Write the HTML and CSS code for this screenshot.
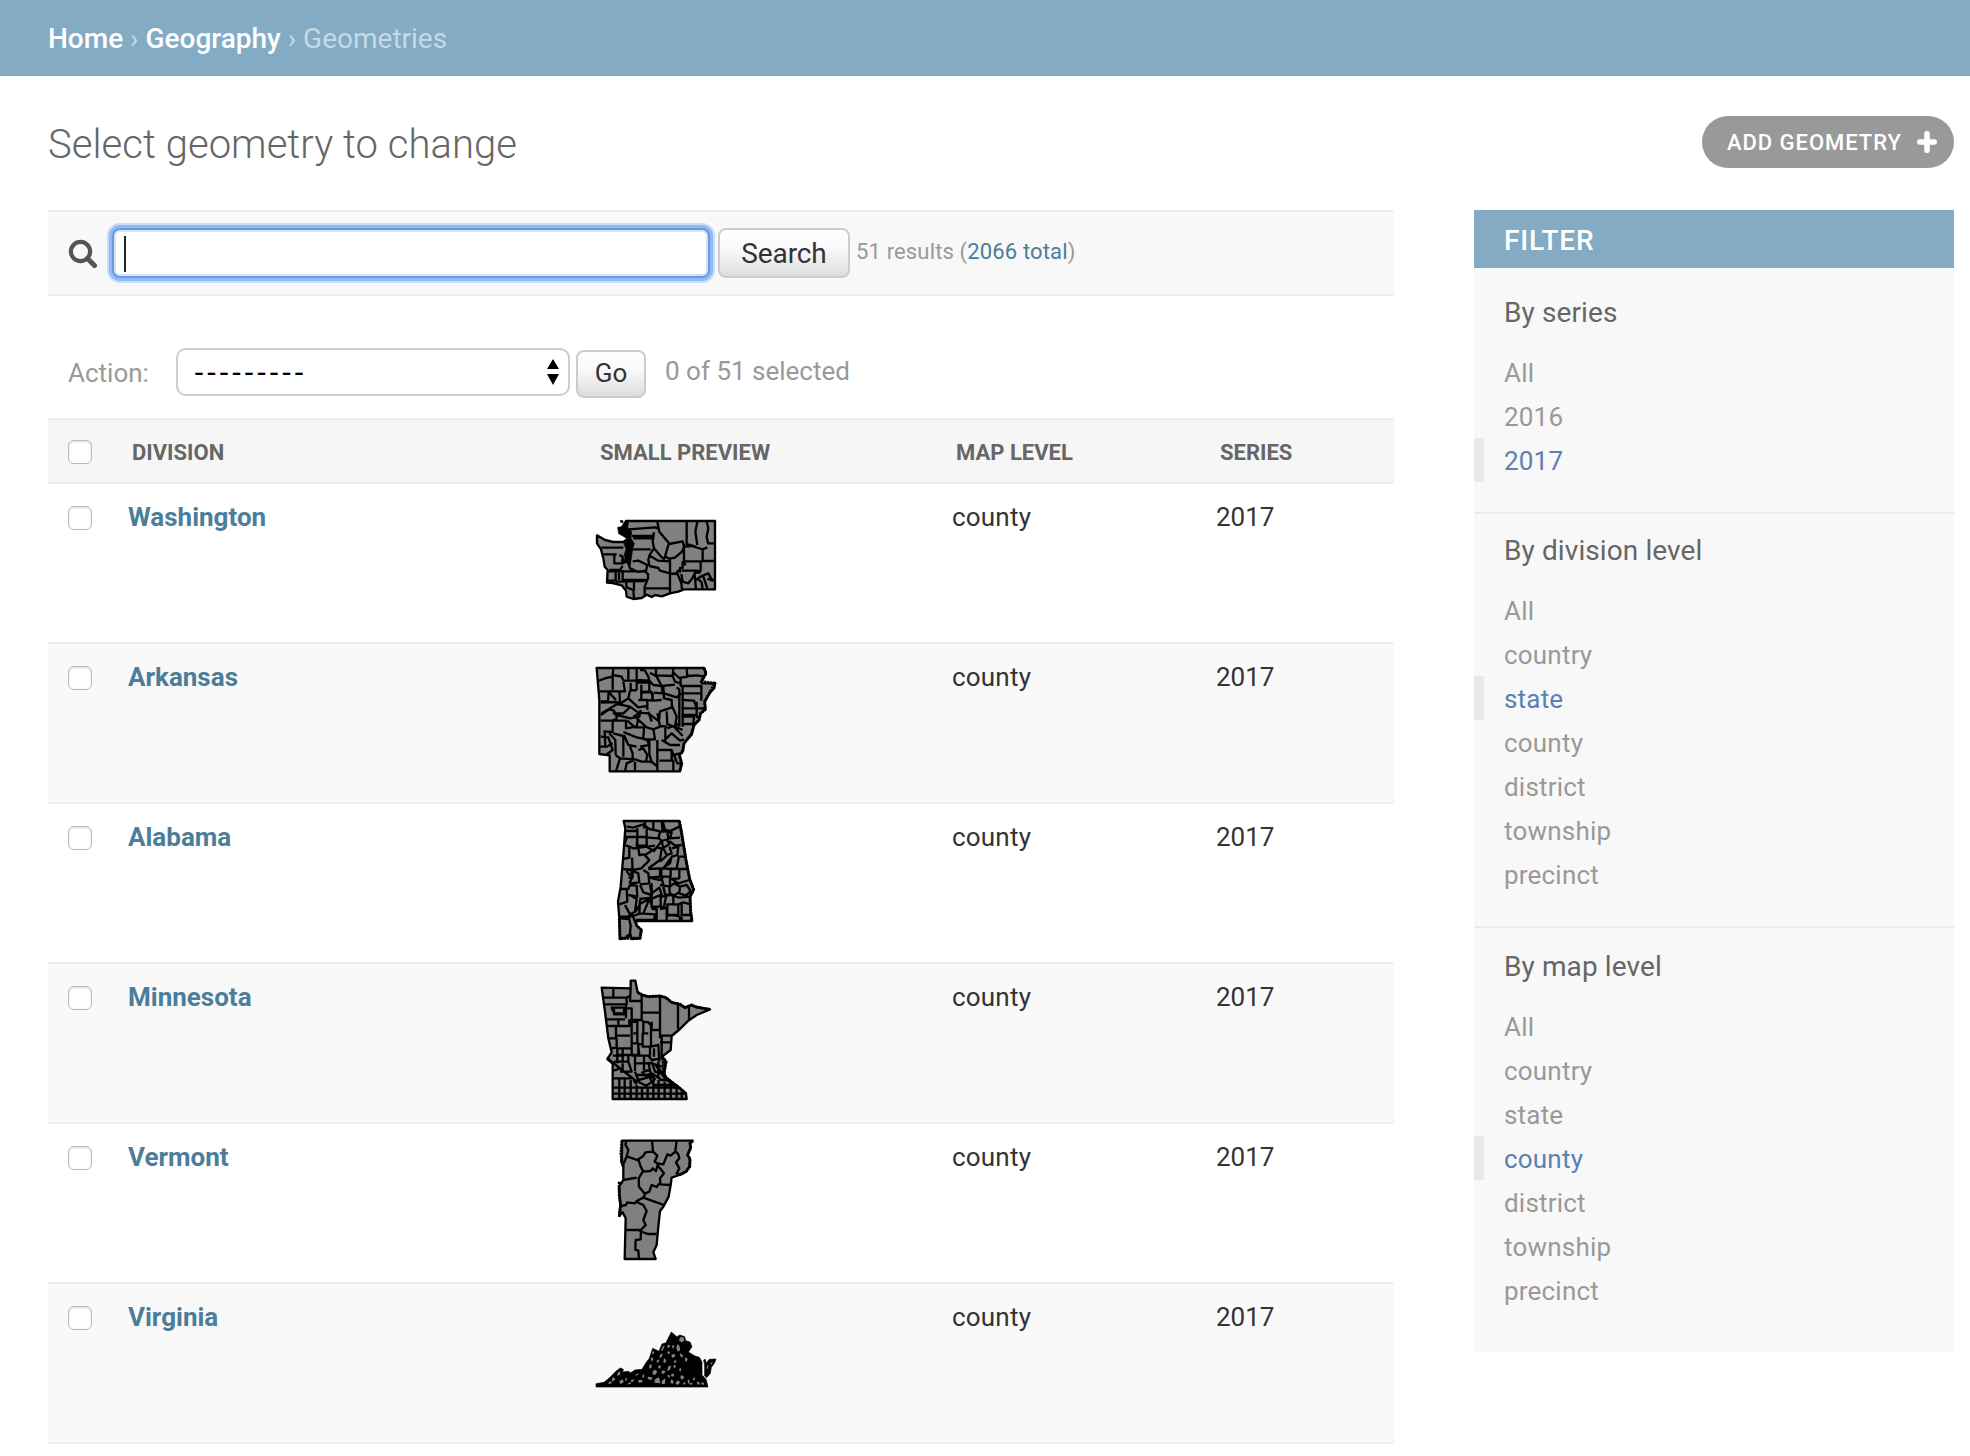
FILE: index.html
```html
<!DOCTYPE html>
<html lang="en">
<head>
<meta charset="utf-8">
<title>Select geometry to change</title>
<link rel="stylesheet" href="styles.css">
</head>
<body>
<nav class="breadcrumbs"><a>Home</a> › <a>Geography</a> › <span>Geometries</span></nav>
<main class="content">
  <header class="page-head">
    <h1><span>Select geometry to change</span></h1>
    <a class="add-button"><span>Add geometry</span>
      <svg width="20" height="22" viewBox="0 0 20 22"><path d="M10 2.8v16.400M2.800 11h14.400" stroke="#fff" stroke-width="5.600" stroke-linecap="round"/></svg>
    </a>
  </header>
  <div class="columns">
    <section class="changelist">
      <form class="toolbar">
        <svg class="search-icon" width="30" height="30" viewBox="0 0 30 30" fill="none" stroke="#555"><circle cx="12.5" cy="12.5" r="9.6" stroke-width="4.2"/><path d="M19.5 19.5L26.500 26.500" stroke-width="5" stroke-linecap="round"/></svg>
        <div class="search-input"><i class="caret"></i></div>
        <button class="btn search-btn" type="button"><span>Search</span></button>
        <span class="results">51 results (<a>2066 total</a>)</span>
      </form>
      <div class="actions">
        <label>Action:</label>
        <div class="select"><span>---------</span><svg width="12" height="26" viewBox="0 0 12 26"><path d="M6 0L12 10H0ZM0 15H12L6 26Z"/></svg></div>
        <button class="btn go-btn" type="button"><span>Go</span></button>
        <span class="counter">0 of 51 selected</span>
      </div>
      <table>
        <colgroup><col class="c1"><col class="c2"><col class="c3"><col class="c4"><col class="c5"></colgroup>
        <thead><tr><th class="check"><i class="box"></i></th><th>Division</th><th>Small preview</th><th>Map level</th><th>Series</th></tr></thead>
        <tbody>
          <tr><td class="check"><i class="box"></i></td><td><a>Washington</a></td><td>
            <svg class="map" viewBox="48 0 360 360">
              <path class="land" d="M138 63H405V268H312L295 275 270 280 245 289 225 285 215 291 200 284 185 294 160 297 140 290 138 272 125 256 98 249 81 248 83 210 74 200 70 175 63 148 51 130 51 106 75 120 100 126 130 126 142 118 150 100 140 88Z"/>
              <path d="M145 88L225 82 236 86M156 108H220M160 115L218 114 222 97M232 65L238 95 267 130 262 145M320 65V132L348 140M352 65L346 95 352 135M380 65L385 85 380 110 384 130H405M222 97L218 125 222 145 212 160 205 178 208 198M157 148H212M222 145L245 172 255 178M267 132L308 124 312 140 306 155 285 173 268 176 255 170 262 145M312 132V190L318 195M314 140L335 138 368 148 382 142M368 145V183H405M312 184H362V212L348 218M306 212H355M270 176V280M300 218V204H308V184M304 212H294L288 222 270 220 240 212 235 204 208 198M205 165L235 182 268 184M64 143H130M70 163H110M103 160V190H128V170L118 165M88 210H120L128 198M85 214H195L204 222V235L194 260V290M128 210V240H200M107 214V242H80M117 218V240M107 245L194 243M198 265H270M138 244L140 262 160 270 162 294M162 244V272M143 183L150 205 175 216 198 212 202 195 175 182 158 184M275 222L292 220 304 250 306 268M304 222L308 245 325 250 337 235 345 218H362M344 222L348 268M344 242L365 228 385 220 395 238 405 240M352 235L365 247 368 268M370 230L382 265M382 236L400 243"/>
              <path class="ink" d="M121 61l8 1-1 6-6-1zM113 82l12-2 8-15 12 2-2 16 12 12-2 20 10 16-5 15-7 50-12-8-12 4-4-12 12-2-2-15 5-15-6-18 12-12-12-8-16-9z"/>
            </svg></td><td>county</td><td>2017</td></tr>
          <tr><td class="check"><i class="box"></i></td><td><a>Arkansas</a></td><td>
            <svg class="map" viewBox="48 30 360 360">
              <path class="land" d="M50 54H372L378 70 364 95 366 100 405 100 403 114 388 130 374 155 376 178 362 190 357 210 342 225 335 252 312 280 308 305 298 315 305 340 300 364H89V316L58 312V150Z"/>
              <path d="M100 54L98 75 125 80 130 92M57 92L78 84 98 80 98 120M145 54V88M170 54V120M130 92H170M55 124H135L130 95M194 60L205 80 208 92 170 90M194 60H180M228 54V78L210 68M280 54L278 78 230 76M320 54L322 80 298 84 278 66M324 78L352 76 372 80M302 84V108H364V152M278 78L285 95 302 100M230 80L245 108 285 104M208 92L220 105 245 108 248 130 222 128M170 98H208V124L185 126M184 104V150M152 98V120L170 122M86 124L84 154 62 154M118 124L120 155M62 158L105 156 125 158 145 145 150 122M88 128L108 150M184 128L215 126 218 150 202 152V180M145 145L175 172 200 168M175 150H205M250 108L252 145 275 150 276 172 240 184 237 210M218 128V152L245 150M252 130L290 142 304 130M290 112L298 118V230M308 108V230M304 130H360M304 150L342 152 350 175 376 175M304 175H350V195H304M350 155V200L360 205M304 200L342 200 340 222H304M62 195L88 178 102 182 112 205M65 190L112 162 150 170 178 190 160 200M98 190L130 190 152 170M112 205L98 212V246L70 244M62 212H138V235L170 230 175 205M112 195L150 205 178 200 182 180M170 205L200 232 220 238 240 230M142 212L165 232 192 232 190 265M176 188L205 190 238 215M260 184L262 222 280 230 295 222M205 185L215 215M232 190L240 228 262 230M275 165L290 200 285 230 308 240M256 230V275M220 236L225 268 190 268M256 268L275 250 300 272 312 268M262 235L280 228 308 258M130 246L170 262 200 268 208 285 180 290M62 260L85 262 98 300 78 315M74 246L76 290M88 250L106 270 107 315M100 250L130 258 130 320M132 255L145 285 170 290M58 290H80L98 280M150 290L158 310 158 335M107 316L120 325 165 328 185 335 215 335 232 350M175 300L190 295 202 315 198 335M208 270V312L216 340M232 270V364M235 300H275L280 315 300 310M238 332H280V364M275 300V330M282 315L292 340H302M165 335V364M135 364L140 340 158 332M120 325L108 364M245 270L270 285 300 285"/>
              <path class="coast" d="M372 54L378 70 364 95 405 100 388 130 374 155 376 178 362 190 357 210 342 225 335 252 312 280 308 305 298 315 305 340 300 362"/>
            </svg></td><td>county</td><td>2017</td></tr>
          <tr><td class="check"><i class="box"></i></td><td><a>Alabama</a></td><td>
            <svg class="map" viewBox="48 45 360 360">
              <path class="land" d="M131 48H298L305 85 318 165 329 222 341 254 330 275 332 320 336 348H168L170 362 184 375 180 400 155 402 150 385 145 398 120 402 118 340 114 290 122 245 130 150 136 70Z"/>
              <path d="M140 65L160 68 190 58 208 72 245 80 272 78 298 65M138 78H175M138 96H205M172 70V122M172 96L170 122 200 122M195 48V62L190 70M200 65V125L225 122M220 48V75M245 48L248 80M248 48L255 75 270 78 298 65M205 98L235 100 240 82M235 98L245 108 265 102 262 80 275 82 270 100 300 98M140 98L133 120 148 125 160 130 202 125M148 125V158L130 162M175 128L178 150 192 148 208 165 195 180M200 125L222 138 245 108M195 150L230 128 245 130 240 165 205 190M156 158L158 195 185 190 195 178M245 108L250 128 268 118 262 105M250 130L260 150 275 145 268 125M268 108L285 122 305 120M275 130L295 125 292 150 275 155 270 175 250 188M240 170L262 150M292 155H315M296 158L290 190 265 192M250 190L272 160M205 192L240 190 280 192H325M240 192V215L205 218M128 192L155 195 158 215 148 235M140 198L150 212M158 198L175 205 178 232 150 235M190 195L205 205 208 235 180 238M208 218L240 225 250 215 270 215V245L240 240M244 192V215M272 192V215M298 192V220L275 222M245 218L250 240M272 220L295 235 328 225M122 252H145L150 240 170 242 172 275 145 270M140 252L142 290 118 298M150 270L170 282 165 320 150 328 135 300M180 240L190 262 210 268 215 278 178 282M210 240L215 265 238 248 245 268 218 280M215 235V305L242 305V270M250 245L255 268 270 270 268 248M270 245L282 235 300 245 298 262 280 272 272 265M298 245L320 240 332 258 318 272 298 265M245 275L270 270 298 278 328 275M258 275L252 305 240 310M262 298H295V330H262ZM280 275V298M295 298L310 292 332 298M305 298V330H330M120 335H150L168 330 180 325 225 328 222 345M168 345H228M165 322L182 295 208 282 190 325M210 285L218 312 230 312 230 345M260 310V345M262 332L280 330 300 335V348M305 335V348M240 312L262 308M180 285L178 325M145 330L152 362 150 385M155 325L170 362M120 340L148 342M138 395L150 388 155 400"/>
              <path class="coast" d="M298 48L305 85 318 165 329 222 341 254 330 275 332 320 336 348M152 190l5 15-10 18M118 340L120 400H155L180 400 184 375 170 362"/>
            </svg></td><td>county</td><td>2017</td></tr>
          <tr><td class="check"><i class="box"></i></td><td><a>Minnesota</a></td><td>
            <svg class="map" viewBox="48 45 360 360">
              <path class="land" d="M65 68L152 70V47H166L173 82 187 90 205 95 240 93 258 98 275 112 300 118 315 128 335 120 348 126 390 133 350 150 325 167 300 192 275 213 272 255 246 275 258 290 252 325 258 338 300 370 318 386 320 402H98V296L82 282 95 262 85 220 75 140Z"/>
              <path d="M100 68V98M72 98H140V118H75M140 98L150 92M152 70L150 108H185M185 90V165H154M138 118V130H155V255M240 95V220M294 118V192M327 125V165M188 143H240M185 165L190 170 205 172 213 182V245M80 163H135M82 183H148V163M115 163V185M138 130V160M92 128H132V148H102V130M95 132L105 145H128M108 183V220H85M110 212H150M110 220V248L95 250M108 250H152M172 170V235L190 240M155 170L175 172M190 170V208M205 205H188V245H215M210 195H240M215 190V170M240 212H275M240 232H270M245 212V275M160 205H172M155 235H175V270H155V255M212 245L235 240 238 290M210 245V275M128 250V290M112 252V295M112 270H155M98 272H128M102 290H145V270M155 272L205 272 215 285 245 280M128 295V320M145 290L155 320H120M165 275V318M192 275V315M165 295H215L245 305M205 290L210 315 190 320M175 245L178 270M222 250V275M85 282L130 318 165 345 198 362 215 352 205 325M98 318L120 310M98 340H160M98 368H298M98 386H318M118 340V402M134 340V402M152 345V402M170 360V402M186 365V402M203 368V402M220 345V402M236 345V402M254 350V402M272 355V402M290 370V402M305 380V402M165 320L175 345 195 340 215 325 245 345 262 345M215 290L225 320 245 325 255 340M185 320L205 340M165 330H205M205 310L225 345M225 298L250 330M235 290V335M160 345L170 358M220 360H280M262 345L285 365"/>
              <path class="coast" d="M173 82L187 90 205 95 240 93 258 98 275 112 300 118 315 128 335 120 348 126 388 133M246 275L258 290 252 325 258 338 300 370 318 386M250 280V330M205 330L225 345M232 305L248 330"/>
            </svg></td><td>county</td><td>2017</td></tr>
          <tr><td class="check"><i class="box"></i></td><td><a>Vermont</a></td><td>
            <svg class="map" viewBox="48 45 360 360">
              <path class="land" d="M126 47H338L330 55 332 68 323 90 330 102 329 125 318 140 298 150 275 158 272 180 266 215 250 245 240 258 233 325 230 360 220 382 227 402H134L137 280 128 262 118 273 121 240 118 205 117 185 130 165 130 125 124 110 126 80Z"/>
              <path d="M140 47L136 58 145 75 140 95 130 118M137 93L175 106M216 47L219 80M290 47L286 78 295 88 298 100 288 112 298 130 290 145 300 150M286 80L272 92 262 88 250 118 233 115M219 80L196 82 190 93 175 103 182 125 190 140 212 138 218 130 228 138 234 116 224 110 232 92 219 80M188 140L176 160 177 185 195 207M130 165L170 158M234 122L252 145 240 160 241 178 272 180M238 175L230 186 215 180 208 200 196 205 190 218 255 241M190 218L170 228 165 235 142 232 138 240 120 244M172 232L190 240 200 258 190 285 197 300 180 318 203 327 230 327M137 315H183L182 343 167 345 166 374 175 377 177 402"/>
              <path class="coast" d="M126 47L123 85 127 115 130 125M118 170V210L122 240 118 275M338 47L330 55 332 68 323 90 330 102 329 125 318 140 298 150"/>
            </svg></td><td>county</td><td>2017</td></tr>
          <tr><td class="check"><i class="box"></i></td><td><a>Virginia</a></td><td>
            <svg class="map" viewBox="48 -30 360 360">
              <path class="ink" d="M48 221L72 217 90 202 112 180 122 174 130 178 128 186 145 184 152 188 165 180 186 178 198 158 208 145 218 115 237 124 246 102 258 98 274 66 290 80 300 75 314 80 317 92 330 96 336 110 325 126 345 138 358 142 366 156 366 195 378 208 384 231H48ZM371 150L376 148 378 160 388 148 408 147 404 158 394 172 391 190 380 203 374 198 374 165Z"/>
              <path class="specks" d="M300 82h10l3 10-8 5-8-5zM291 103l7 4 3 13-7 5-5-9zM278 104l5 4-2 7-5-2zM263 104l8 2-3 6-6 2zM250 107l4 2-7 14-4-2zM216 126l4-4 2 7-4 5zM212 145l6-3 2 7-5 6zM240 134l8-4-2 10-8 5zM264 123l6 3-2 7-6-3zM274 134l10-3 1 9-9 3zM302 130l8 8-3 5-8-7zM316 142l7 4-3 10-6-5zM284 150l6 3-4 6-5-2zM252 145l7 5-4 10-5-3zM230 152l6-4 2 6-7 5zM208 165l8-2-2 10-7 3zM237 165l6 3-3 8-6-2zM265 169l8-2-3 12-9 4zM282 164l6 3-3 7-5-2zM300 174l4 3-2 8-5-4zM218 184l8-5 6 6-7 10-7-2zM247 181l10 3-6 8-7-3zM275 191l8 1-3 8-7-2zM302 197l6-1 5 7-7 6-5-6zM204 200l13 2-3 8-11-3zM225 208l12-6 4 18-18-2zM245 213l11-8-1 16-9 2zM263 194l8 3-2 6-6-3zM274 208l7 6-3 8-7-4zM293 211l8 6-8 8-7-5zM323 208l5 2 1 8-5 3zM341 202l5 2-3 8-4-3zM350 215l7 1 3 7-7 1zM365 216l8 4-2 5-7-2zM114 187l8-2-2 9-9 4zM96 206l7-5 2 8-9 6zM118 213l10-5 3 8-9 7zM135 207l7-4-2 8-4 2zM154 210l8-3-3 8-7 1zM168 193l8-3-3 5-7 2zM174 211l10-2 5 7-13 2zM145 218h10l-5 5h-7zM86 216l10-2-3 7h-8zM187 197l5-5 1 9-5 3zM328 220l10-2-3 7-6-2zM310 218l7-2-2 8-6-2zM392 158l6-1-4 7-3-2zM380 172l4-8 2 3-5 12z"/>
            </svg></td><td>county</td><td>2017</td></tr>
        </tbody>
      </table>
    </section>
    <aside class="filter">
      <h2><span>Filter</span></h2>
      <section class="series"><h3>By series</h3><ul><li>All</li><li>2016</li><li class="selected">2017</li></ul></section>
      <section class="division"><h3>By division level</h3><ul><li>All</li><li>country</li><li class="selected">state</li><li>county</li><li>district</li><li>township</li><li>precinct</li></ul></section>
      <section class="level"><h3>By map level</h3><ul><li>All</li><li>country</li><li>state</li><li class="selected">county</li><li>district</li><li>township</li><li>precinct</li></ul></section>
    </aside>
  </div>
</main>
</body>
</html>
```
FILE: styles.css
```css
* { box-sizing: border-box; }
body { margin: 0; background: #fff; color: #333; font: 26px/34px Roboto, "Liberation Sans", sans-serif; }
h1, h2, h3, ul { margin: 0; padding: 0; font-weight: 400; list-style: none; }
i { display: block; }
.breadcrumbs { height: 76px; padding-left: 48px; background: #83abc4; color: #c5d9e6; font-size: 28px; line-height: 78px; }
.breadcrumbs a { color: #fff; font-weight: 500; }
.content { padding: 40px 16px 0 48px; }
.page-head { display: flex; justify-content: space-between; height: 94px; }
h1 { color: #666; font-size: 40px; font-weight: 300; line-height: 58px; letter-spacing: 0.05px; }
.add-button { display: flex; align-items: center; justify-content: space-between; width: 252px; height: 52px; padding: 0 17px 0 25px; border-radius: 26px; background: #999; color: #fff; font-size: 22px; font-weight: 500; line-height: 36px; letter-spacing: 0.95px; text-transform: uppercase; }
.add-button span { padding-top: 1px; }
.columns { display: flex; justify-content: space-between; align-items: flex-start; }
.changelist { width: 1346px; }
.toolbar { display: flex; align-items: center; height: 86px; padding-left: 20px; border-top: 2px solid #eee; border-bottom: 2px solid #eee; background: #f8f8f8; }
.search-icon { margin: 2px 14px 0 0; }
.search-input { width: 598px; height: 50px; padding: 6px 10px; border: 2px solid #6b9bd3; border-radius: 8px; background: #fff; box-shadow: 0 0 0 3px #8ebbf5, 0 0 0 5px #c8def7, inset 0 0 0 2px #d2e4fa; }
.caret { width: 2px; height: 36px; background: #222; }
.btn { padding: 0; border: 2px solid #ccc; border-radius: 8px; background: linear-gradient(#fff, #fafafa 40%, #ddd); color: #333; font-family: inherit; }
.search-btn { width: 132px; height: 50px; margin-left: 8px; padding-top: 1px; font-size: 28px; letter-spacing: -0.1px; }
.results { margin: 0 0 2px 6px; color: #999; font-size: 22px; letter-spacing: 0.15px; }
a { color: #4b7e9a; }
.actions { display: flex; align-items: center; height: 122px; padding: 32px 0 0 20px; color: #999; }
.actions label { width: 108px; }
.select { display: flex; align-items: center; justify-content: space-between; width: 394px; height: 48px; margin-bottom: 2px; padding: 0 9px 0 16px; border: 2px solid #ccc; border-radius: 10px; color: #000; }
.select span { font-family: "Liberation Sans", sans-serif; font-size: 30px; line-height: 30px; letter-spacing: 2.5px; }
.go-btn { width: 70px; height: 48px; margin: 2px 0 0 6px; padding-bottom: 2px; font-size: 26px; }
.counter { margin: 0 0 5px 19px; }
table { width: 1346px; table-layout: fixed; border-collapse: separate; border-spacing: 0; }
.c1 { width: 64px; } .c2 { width: 468px; } .c3 { width: 356px; } .c4 { width: 264px; } .c5 { width: 194px; }
th { height: 66px; padding: 3px 20px 0; border-top: 2px solid #eee; border-bottom: 2px solid #eee; background: #f6f6f6; color: #666; font-size: 22px; line-height: 30px; text-align: left; text-transform: uppercase; }
td { height: 160px; padding: 16px 16px 0; border-bottom: 2px solid #eee; vertical-align: top; }
td:nth-child(4) { letter-spacing: 0.2px; }
td a { font-weight: 700; }
tbody tr:nth-child(even) { background: #f9f9f9; }
th.check { padding: 2px 20px 0; }
td.check { padding: 22px 20px 0; }
.box { width: 24px; height: 24px; border: 1.500px solid #b8b8b8; border-radius: 6px; background: #fff; box-shadow: inset 0 1px 2px #ddd; }
.map { display: block; width: 120px; height: 120px; overflow: visible; fill: none; stroke: #000; stroke-width: 7; stroke-linejoin: round; }
.land { fill: #808080; }
.coast { stroke-width: 9; stroke-dasharray: 7 2; }
.ink { fill: #000; stroke-width: 2; }
.specks { fill: #858585; stroke: none; }
.filter { width: 480px; height: 1142px; background: #f8f8f8; }
.filter h2 { height: 58px; padding-left: 30px; background: #83abc4; color: #fff; font-size: 28px; font-weight: 500; line-height: 62px; letter-spacing: 0.8px; text-transform: uppercase; }
.filter section { border-bottom: 2px solid #eaeaea; padding-bottom: 30px; }
.filter h3 { padding-left: 30px; color: #666; font-size: 28px; line-height: 38px; letter-spacing: 0.1px; }
.series h3 { padding-top: 26px; height: 82px; }
.division h3 { padding-top: 18px; height: 74px; }
.filter .level { border: 0; padding-bottom: 40px; }
.level h3 { padding-top: 20px; height: 76px; }
.filter li { height: 44px; padding-left: 30px; color: #999; line-height: 46px; letter-spacing: 0.2px; }
.filter li.selected { padding-left: 20px; border-left: 10px solid #e9e9e9; color: #5b80b2; }
```
